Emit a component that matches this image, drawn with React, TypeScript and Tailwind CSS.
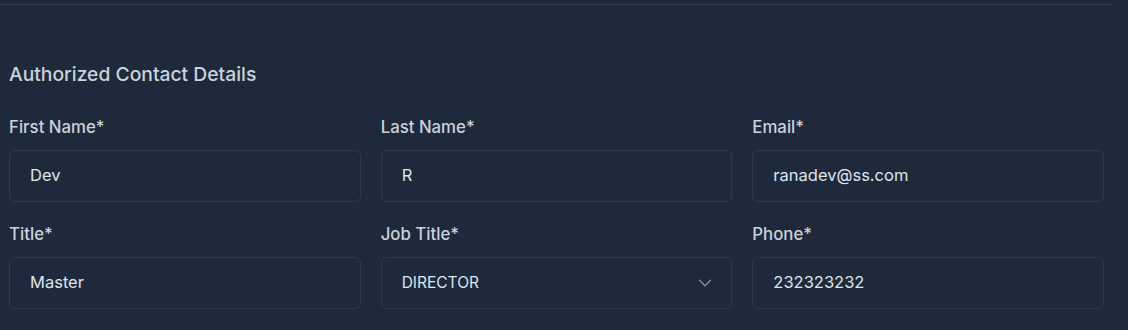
import React from "react";
import { ChevronDown } from "lucide-react";

type Field = { label: string; value: string; select?: boolean };

const rows: Field[][] = [
  [
    { label: "First Name*", value: "Dev" },
    { label: "Last Name*", value: "R" },
    { label: "Email*", value: "ranadev@ss.com" },
  ],
  [
    { label: "Title*", value: "Master" },
    { label: "Job Title*", value: "DIRECTOR", select: true },
    { label: "Phone*", value: "232323232" },
  ],
];

function FieldBox({ f }: { f: Field }) {
  return (
    <div>
      <label className="block text-[16.8px] leading-6 font-medium text-[#cbd2dc]">{f.label}</label>
      <div className="mt-[11px] h-[52px] rounded-md border border-[#2d3a4e] flex items-center pl-5 pr-[15px] pb-px">
        <span className={f.select ? "text-[15.5px] text-[#dfe5ec]" : "text-[16.5px] text-[#dfe5ec]"}>{f.value}</span>
        {f.select && <ChevronDown className="ml-auto w-[22px] h-[22px] text-[#8b95a5]" strokeWidth={1.3} />}
      </div>
    </div>
  );
}

export default function App() {
  return (
    <div className="h-[330px] w-full bg-[#1e293b] pt-1 font-['Inter',sans-serif]">
      <div className="h-px mr-4 bg-[#334155]" />
      <div className="pl-[9px] pr-6">
        <h3 className="mt-[55px] text-[19.3px] leading-7 font-medium text-[#cbd2dc]">Authorized Contact Details</h3>
        <div className="mt-[27px] space-y-5">
          {rows.map((row, i) => (
            <div key={i} className="grid grid-cols-3 gap-5">
              {row.map((f) => (
                <FieldBox key={f.label} f={f} />
              ))}
            </div>
          ))}
        </div>
      </div>
    </div>
  );
}
